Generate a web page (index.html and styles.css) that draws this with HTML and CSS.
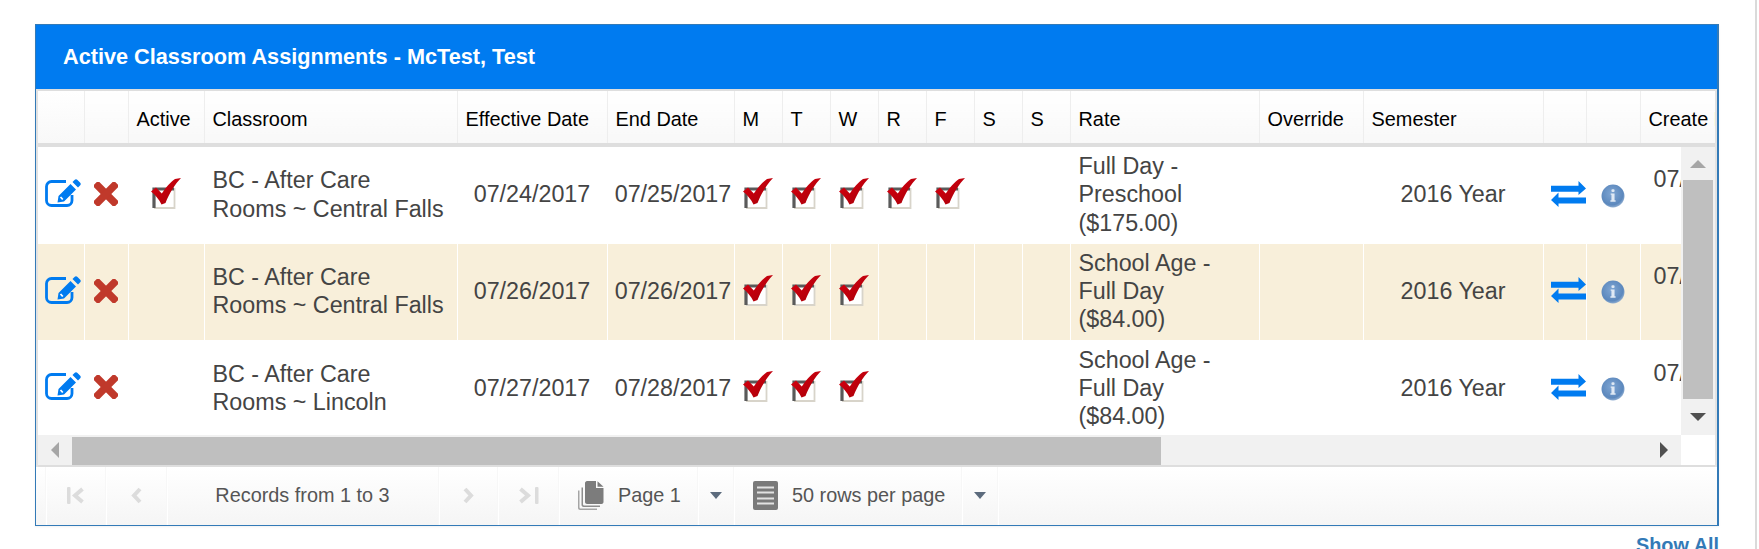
FILE: index.html
```html
<!DOCTYPE html>
<html lang="en">
<head>
<meta charset="utf-8">
<title>Active Classroom Assignments</title>
<link rel="stylesheet" href="styles.css">
</head>
<body>
<svg class="sprite" aria-hidden="true">
  <defs>
    <radialGradient id="infoFill" cx="45%" cy="40%" r="65%">
      <stop offset="0" stop-color="#7fa6d3"/>
      <stop offset="0.75" stop-color="#5c88bd"/>
      <stop offset="1" stop-color="#a3bcd9"/>
    </radialGradient>
    <linearGradient id="checkFill" x1="0" y1="0" x2="1" y2="1">
      <stop offset="0" stop-color="#dc0010"/>
      <stop offset="1" stop-color="#a30008"/>
    </linearGradient>
    <symbol id="i-edit" viewBox="0 0 36 29">
      <path d="M21 3.5H6.5A5 5 0 0 0 1.5 8.500V22.500A5 5 0 0 0 6.500 27.500H22A5 5 0 0 0 27 22.500V17" fill="none" stroke="#007bf0" stroke-width="2.800"/>
      <path d="M12.500 24.500L13.500 18L25.500 6L31 11.500L19 23.500ZM27.500 4L29.500 2C30.500 1 31.500 1 32.500 2L35 4.500C36 5.500 36 6.500 35 7.500L33 9.500Z" fill="#007bf0"/>
      <path d="M15.500 19L17.800 21.500" stroke="#fff" stroke-width="1.800" fill="none"/>
    </symbol>
    <symbol id="i-del" viewBox="0 0 24 24">
      <rect x="-3" y="8.200" width="30" height="7.600" rx="1.500" fill="#c0392b" transform="rotate(45 12 12)"/>
      <rect x="-3" y="8.200" width="30" height="7.600" rx="1.500" fill="#c0392b" transform="rotate(-45 12 12)"/>
    </symbol>
    <symbol id="i-check" viewBox="0 0 30 31">
      <path d="M3 11H23V30H3Z" fill="#fff"/>
      <path d="M23.500 10V30H3" fill="none" stroke="#d8d4ca" stroke-width="1.800"/>
      <path d="M3 30V11H23" fill="none" stroke="#5a5a5a" stroke-width="3.200"/>
      <path d="M0 13.500L5 9.500L10.800 15.500C14.500 10 19.500 4 24 1L30 0C24 6 18.500 15 14.500 25L10.500 26.500C8 21.500 4.500 17 0 13.500Z" fill="url(#checkFill)"/>
    </symbol>
    <symbol id="i-swap" viewBox="0 0 35 26">
      <path d="M0 4.800H27.500V0L35 7.500L27.500 14V10.800H0Z" fill="#007bf0"/>
      <path d="M35 16.500H7.500V11.500L0 19L7.500 26V22.500H35Z" fill="#007bf0"/>
    </symbol>
    <symbol id="i-info" viewBox="0 0 23 23">
      <circle cx="11.500" cy="11.500" r="11" fill="url(#infoFill)"/>
      <rect x="10" y="5" width="3" height="2.600" rx="1" fill="#dfe9f4"/>
      <path d="M9.300 9H13V15.500H14V17H9V15.500H10V10.300H9.300Z" fill="#dfe9f4"/>
    </symbol>
    <symbol id="i-first" viewBox="0 0 18 17">
      <rect x="0" y="0" width="3.500" height="17" rx="1" fill="#dcdcdc"/>
      <path d="M15.500 2L8 8.500L15.500 15" fill="none" stroke="#dcdcdc" stroke-width="4"/>
    </symbol>
    <symbol id="i-prev" viewBox="0 0 11 17">
      <path d="M9 2L3 8.500L9 15" fill="none" stroke="#dcdcdc" stroke-width="4"/>
    </symbol>
    <symbol id="i-next" viewBox="0 0 11 17">
      <path d="M2 2L8 8.500L2 15" fill="none" stroke="#dcdcdc" stroke-width="4"/>
    </symbol>
    <symbol id="i-last" viewBox="0 0 21 17">
      <path d="M2.500 2L10 8.500L2.500 15" fill="none" stroke="#dcdcdc" stroke-width="4"/>
      <rect x="17" y="0" width="3.500" height="17" rx="1" fill="#dcdcdc"/>
    </symbol>
    <symbol id="i-pages" viewBox="0 0 26 29">
      <path d="M0 9.500H1.500V26C1.500 27 2 27.500 3 27.500H19V29H2C1 29 0 28 0 27Z" fill="#a5a5a5"/>
      <path d="M3.500 6.500H5V23C5 24 5.500 24.500 6.500 24.500H22V26H5.500C4.500 26 3.500 25 3.500 24Z" fill="#8d8d8d"/>
      <path d="M7 2C7 1 8 0 9 0H18V7H25.500V21C25.500 22 24.500 23 23.500 23H9C8 23 7 22 7 21Z" fill="#7c7c7c"/>
      <path d="M19.500 0.300L25.500 5.700H19.500Z" fill="#7c7c7c"/>
    </symbol>
    <symbol id="i-rows" viewBox="0 0 25 29">
      <rect width="25" height="29" rx="2" fill="#7a7a7a"/>
      <path d="M4 6.500H21M4 11.500H21M4 17.500H21M4 22.500H21" stroke="#e2e2e2" stroke-width="2" fill="none"/>
    </symbol>
  </defs>
</svg>

<main class="page">
  <section class="panel">
    <h1 class="panel-title">Active Classroom Assignments - McTest, Test</h1>
    <div class="grid">
      <div class="grid-head">
        <table class="table">
          <colgroup>
            <col class="c-edit"><col class="c-del"><col class="c-active"><col class="c-room"><col class="c-eff"><col class="c-end">
            <col class="c-day"><col class="c-day"><col class="c-day"><col class="c-day"><col class="c-day"><col class="c-day"><col class="c-day">
            <col class="c-rate"><col class="c-over"><col class="c-sem"><col class="c-swap"><col class="c-info"><col class="c-create">
          </colgroup>
          <thead>
            <tr>
              <th></th><th></th><th>Active</th><th>Classroom</th><th>Effective Date</th><th>End Date</th>
              <th>M</th><th>T</th><th>W</th><th>R</th><th>F</th><th>S</th><th>S</th>
              <th>Rate</th><th>Override</th><th>Semester</th><th></th><th></th><th>Create Date</th>
            </tr>
          </thead>
        </table>
      </div>
      <div class="grid-mid">
        <div class="grid-body">
          <table class="table">
            <colgroup>
              <col class="c-edit"><col class="c-del"><col class="c-active"><col class="c-room"><col class="c-eff"><col class="c-end">
              <col class="c-day"><col class="c-day"><col class="c-day"><col class="c-day"><col class="c-day"><col class="c-day"><col class="c-day">
              <col class="c-rate"><col class="c-over"><col class="c-sem"><col class="c-swap"><col class="c-info"><col class="c-create">
            </colgroup>
            <tbody>
              <tr>
                <td class="ic ic-edit"><svg class="i-edit"><use href="#i-edit"/></svg></td>
                <td class="ic ic-del"><svg class="i-del"><use href="#i-del"/></svg></td>
                <td class="ic"><svg class="i-check"><use href="#i-check"/></svg></td>
                <td>BC - After Care Rooms ~ Central Falls</td>
                <td class="ctr">07/24/2017</td>
                <td class="ctr end">07/25/2017</td>
                <td class="ic"><svg class="i-check"><use href="#i-check"/></svg></td>
                <td class="ic"><svg class="i-check"><use href="#i-check"/></svg></td>
                <td class="ic"><svg class="i-check"><use href="#i-check"/></svg></td>
                <td class="ic"><svg class="i-check"><use href="#i-check"/></svg></td>
                <td class="ic"><svg class="i-check"><use href="#i-check"/></svg></td>
                <td></td><td></td>
                <td class="rate">Full Day - Preschool ($175.00)</td>
                <td></td>
                <td class="ctr">2016 Year</td>
                <td class="ic ic-swap"><svg class="i-swap"><use href="#i-swap"/></svg></td>
                <td class="ic"><svg class="i-info"><use href="#i-info"/></svg></td>
                <td class="create">07/24/2017</td>
              </tr>
              <tr>
                <td class="ic ic-edit"><svg class="i-edit"><use href="#i-edit"/></svg></td>
                <td class="ic ic-del"><svg class="i-del"><use href="#i-del"/></svg></td>
                <td></td>
                <td>BC - After Care Rooms ~ Central Falls</td>
                <td class="ctr">07/26/2017</td>
                <td class="ctr end">07/26/2017</td>
                <td class="ic"><svg class="i-check"><use href="#i-check"/></svg></td>
                <td class="ic"><svg class="i-check"><use href="#i-check"/></svg></td>
                <td class="ic"><svg class="i-check"><use href="#i-check"/></svg></td>
                <td></td><td></td><td></td><td></td>
                <td class="rate">School Age - Full Day ($84.00)</td>
                <td></td>
                <td class="ctr">2016 Year</td>
                <td class="ic ic-swap"><svg class="i-swap"><use href="#i-swap"/></svg></td>
                <td class="ic"><svg class="i-info"><use href="#i-info"/></svg></td>
                <td class="create">07/26/2017</td>
              </tr>
              <tr>
                <td class="ic ic-edit"><svg class="i-edit"><use href="#i-edit"/></svg></td>
                <td class="ic ic-del"><svg class="i-del"><use href="#i-del"/></svg></td>
                <td></td>
                <td>BC - After Care Rooms ~ Lincoln</td>
                <td class="ctr">07/27/2017</td>
                <td class="ctr end">07/28/2017</td>
                <td class="ic"><svg class="i-check"><use href="#i-check"/></svg></td>
                <td class="ic"><svg class="i-check"><use href="#i-check"/></svg></td>
                <td class="ic"><svg class="i-check"><use href="#i-check"/></svg></td>
                <td></td><td></td><td></td><td></td>
                <td class="rate">School Age - Full Day ($84.00)</td>
                <td></td>
                <td class="ctr">2016 Year</td>
                <td class="ic ic-swap"><svg class="i-swap"><use href="#i-swap"/></svg></td>
                <td class="ic"><svg class="i-info"><use href="#i-info"/></svg></td>
                <td class="create">07/27/2017</td>
              </tr>
            </tbody>
          </table>
        </div>
        <div class="vbar">
          <div class="sb-btn-v"><span class="tri tri-up"></span></div>
          <div class="vthumb"></div>
          <div class="sb-btn-v sb-fill"><span class="tri tri-down"></span></div>
        </div>
      </div>
      <div class="grid-hbar">
        <div class="hbar">
          <div class="sb-btn-h"><span class="tri tri-left"></span></div>
          <div class="hthumb"></div>
          <div class="sb-fill-h"><span class="tri tri-right"></span></div>
        </div>
        <div class="corner"></div>
      </div>
    </div>
    <div class="pager">
      <div class="pg pg-pad"></div>
      <div class="pg pg-first"><svg class="i-first"><use href="#i-first"/></svg></div>
      <div class="pg pg-prev"><svg class="i-prev"><use href="#i-prev"/></svg></div>
      <div class="pg pg-rec">Records from 1 to 3</div>
      <div class="pg pg-next"><svg class="i-next"><use href="#i-next"/></svg></div>
      <div class="pg pg-last"><svg class="i-last"><use href="#i-last"/></svg></div>
      <div class="pg pg-page"><svg class="i-pages"><use href="#i-pages"/></svg>Page 1</div>
      <div class="pg pg-caret"><span class="caret"></span></div>
      <div class="pg pg-rows"><svg class="i-rows"><use href="#i-rows"/></svg>50 rows per page</div>
      <div class="pg pg-caret"><span class="caret"></span></div>
    </div>
  </section>
  <div class="links"><a class="show-all" href="#">Show All</a></div>
</main>
<div class="rail"></div>
</body>
</html>
```
FILE: styles.css
```css
html, body {
  margin: 0;
  height: 549px;
  overflow: hidden;
  background: #fff;
}
body {
  display: flex;
  font-family: "Liberation Sans", Arial, sans-serif;
  color: #444;
}
.sprite {
  display: block;
  width: 0;
  height: 0;
}
.page {
  width: 1755px;
  flex: none;
  box-sizing: border-box;
  padding: 24px 0 0 35px;
}
.rail {
  width: 2px;
  height: 549px;
  flex: none;
  background: #dadada;
}
.panel {
  width: 1684px;
  box-sizing: border-box;
  border: 1px solid #337ab7;
  border-right-width: 2px;
  box-shadow: 0 1px 2px rgba(0, 0, 0, 0.06);
}
.panel-title {
  margin: 0;
  height: 64px;
  padding-left: 27px;
  box-sizing: border-box;
  display: flex;
  align-items: center;
  background: #007bf0;
  color: #fff;
  font-size: 21.7px;
  font-weight: bold;
}
.grid {
  border-left: 2px solid #e2e2e2;
  border-right: 2px solid #e2e2e2;
}
.grid-head {
  height: 52px;
  overflow: hidden;
  border-top: 2px solid #dedede;
  border-bottom: 4px solid #dedede;
}
.table {
  table-layout: fixed;
  width: 1752px;
  border-collapse: collapse;
}
.c-edit { width: 46px; }
.c-del { width: 44px; }
.c-active { width: 76px; }
.c-room { width: 253px; }
.c-eff { width: 150px; }
.c-end { width: 127px; }
.c-day { width: 48px; }
.c-rate { width: 189px; }
.c-over { width: 104px; }
.c-sem { width: 180px; }
.c-swap { width: 43px; }
.c-info { width: 54px; }
.c-create { width: 150px; }
th {
  height: 52px;
  padding: 5px 0 0 8px;
  box-sizing: border-box;
  text-align: left;
  font-size: 19.9px;
  font-weight: normal;
  color: #000;
  white-space: nowrap;
  background: linear-gradient(#fff, #f8f8f8);
  border-right: 1px solid #eee;
}
th:last-child { border-right: 0; }
.grid-mid {
  display: flex;
  height: 288px;
}
.grid-body {
  width: 1643px;
  flex: none;
  overflow: hidden;
}
td {
  height: 96px;
  padding: 0 8px 2px 8px;
  box-sizing: border-box;
  font-size: 23.3px;
  line-height: 28.300px;
  color: #444;
  vertical-align: middle;
  border-right: 1px solid #fff;
}
tr:first-child td { height: 97px; }
tr:nth-child(2) td { background: #f8efda; }
tr:last-child td { padding-bottom: 0; }
.ctr {
  text-align: center;
  padding-left: 0;
  padding-right: 0;
  white-space: nowrap;
}
.end { padding-left: 5px; }
.rate { padding-right: 24px; }
.create {
  vertical-align: top;
  padding-top: 18px;
  padding-left: 13px;
  white-space: nowrap;
}
tr:last-child td.create { padding-top: 19px; }
td.ic {
  padding: 0 0 4px;
  text-align: center;
  line-height: 0;
}
tr:last-child td.ic { padding-bottom: 3px; }
td.ic-edit { text-align: left; padding-left: 7px; padding-bottom: 6px; }
tr:last-child td.ic-edit { padding-bottom: 5px; }
td.ic-del { padding-bottom: 3px; }
td.ic-swap { padding-left: 7px; text-align: left; }
.ic svg { display: inline-block; vertical-align: middle; }
.i-edit { width: 36px; height: 29px; }
.i-del { width: 24px; height: 24px; }
.i-check { width: 30px; height: 31px; }
.i-swap { width: 35px; height: 26px; }
.i-info { width: 24px; height: 24px; margin-top: 4px; }
.vbar {
  width: 34px;
  flex: none;
  display: flex;
  flex-direction: column;
  background: #f1f1f1;
}
.sb-btn-v {
  height: 33px;
  flex: none;
  display: flex;
  align-items: center;
  justify-content: center;
}
.sb-fill {
  flex: 1;
}
.vthumb {
  height: 219px;
  margin: 0 2px;
  flex: none;
  background: #bfbfbf;
}
.tri {
  width: 0;
  height: 0;
  display: block;
  border-style: solid;
  border-color: transparent;
}
.tri-up { border-width: 0 8px 8px; border-bottom-color: #a6a6a6; }
.tri-down { border-width: 8px 8px 0; border-top-color: #505050; }
.tri-left { border-width: 8px 8px 8px 0; border-right-color: #a6a6a6; }
.tri-right { border-width: 8px 0 8px 8px; border-left-color: #505050; }
.grid-hbar {
  display: flex;
  height: 30px;
  border-bottom: 2px solid #dedede;
}
.hbar {
  width: 1643px;
  flex: none;
  display: flex;
  background: #f1f1f1;
}
.sb-btn-h {
  width: 34px;
  flex: none;
  display: flex;
  align-items: center;
  justify-content: center;
}
.hthumb {
  width: 1089px;
  flex: none;
  margin-top: 2px;
  background: #bfbfbf;
}
.sb-fill-h {
  flex: 1;
  display: flex;
  align-items: center;
  justify-content: flex-end;
  padding-right: 13px;
}
.corner {
  flex: 1;
  background: #fff;
}
.pager {
  height: 58px;
  display: flex;
  background: linear-gradient(#fff, #f5f5f5);
  font-size: 19.85px;
  color: #555;
}
.pg {
  flex: none;
  display: flex;
  align-items: center;
  box-sizing: border-box;
  padding-bottom: 2px;
  border-right: 1px solid #f7f7f7;
  box-shadow: 1px 0 0 #fff;
}
.pg-pad { width: 10px; }
.pg-first { width: 60px; justify-content: center; }
.pg-prev { width: 61px; justify-content: center; }
.pg-rec { width: 272px; justify-content: center; }
.pg-next { width: 59px; justify-content: center; }
.pg-last { width: 61px; justify-content: center; }
.pg-page { width: 139px; padding-left: 19px; }
.pg-caret { width: 36px; justify-content: center; }
.pg-rows { width: 228px; padding-left: 19px; }
.i-first { width: 18px; height: 17px; }
.i-prev, .i-next { width: 11px; height: 17px; }
.i-last { width: 21px; height: 17px; }
.i-pages { width: 26px; height: 29px; margin-right: 14px; }
.i-rows { width: 25px; height: 29px; margin-right: 14px; }
.caret {
  width: 0;
  height: 0;
  display: block;
  border-style: solid;
  border-width: 7px 6.500px 0;
  border-color: #5c6b7d transparent transparent;
}
.links {
  width: 1684px;
  margin-top: 8px;
  text-align: right;
  line-height: 22px;
}
.show-all {
  font-size: 19.85px;
  font-weight: bold;
  color: #337ab7;
  text-decoration: none;
}
```
